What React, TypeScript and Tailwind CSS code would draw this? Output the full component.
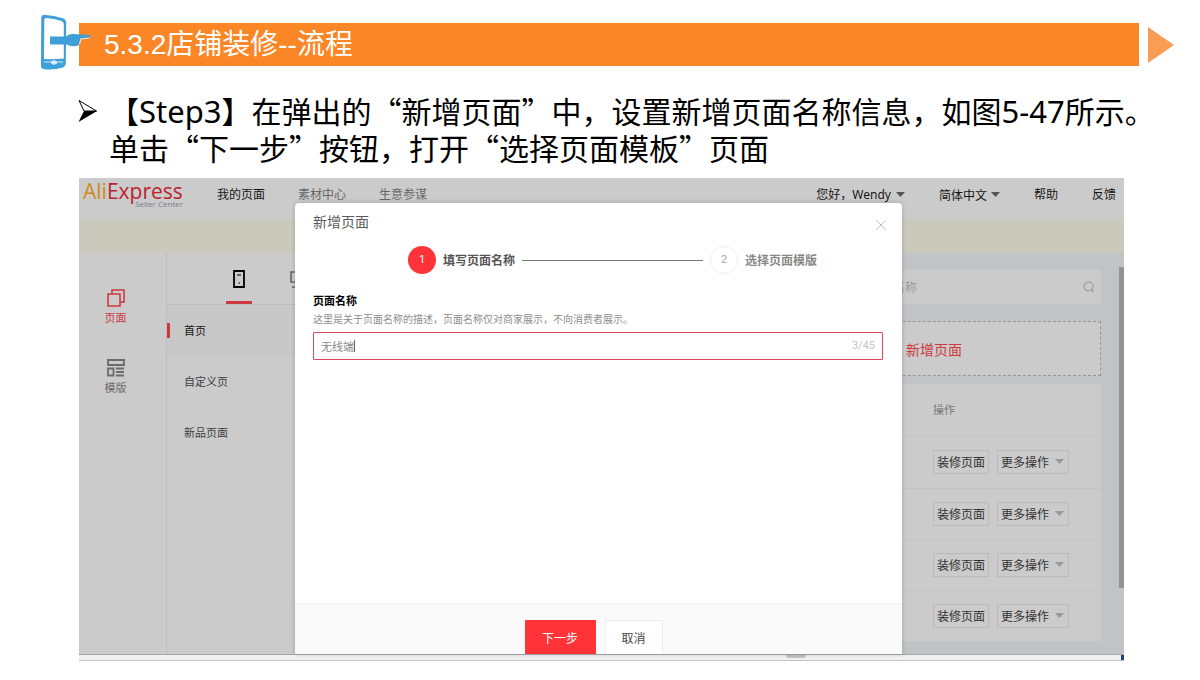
import React from "react";

const hans = "font-['Noto_Sans_CJK_SC',sans-serif]";

function Caret({ className }: { className: string }) {
  return (
    <svg width="9" height="5" viewBox="0 0 9 5" className={className} aria-hidden="true">
      <path d="M0 0h9L4.5 5z" fill="currentColor" />
    </svg>
  );
}

function PhoneLogo() {
  return (
    <svg
      className="absolute -left-10 -top-[9px]"
      width="54"
      height="58"
      viewBox="0 0 54 58"
      aria-hidden="true"
    >
      <path
        fillRule="evenodd"
        fill="#3f9fd8"
        d="M5 .8Q2.500.6 2.300 3.500L2 51.500Q2 54.500 4.500 55Q14 56.500 24 53.500Q26.500 52.500 26.800 49.500L27.200 9Q27.200 5.500 24.500 4.500Q15 1.200 5 .8ZM7 4Q15 4.500 22.500 7Q24.800 8 24.800 10V44.500Q14 45.500 5 45L5.300 5.500Q5.400 4 7 4Z"
      />
      <path d="M5 48h7.500M17.500 48h6.500" stroke="#d8effa" strokeWidth="1.200" />
      <path d="M12 47.500l3-1.500 3 1.500v2l-3 1.500-3-1.500z" fill="#d8effa" />
      <path
        fill="#3f9fd8"
        d="M11 22.500H27Q30 19.500 34 20L50.500 21Q53 22 50.500 23.500L42.500 24.500Q42 29.500 38.500 31.800Q32 33 27.500 30.500H11Z"
      />
      <path d="M40.500 30l1.500-5 8.500-1" stroke="#ffe3c4" strokeWidth="1.200" fill="none" />
    </svg>
  );
}

function TopNav() {
  return (
    <header className="flex h-[42px] items-start justify-between bg-[#cbcbcb] pl-1 pr-2 text-xs text-[#161616]">
      <div className="flex gap-[34px]">
        <a href="#home" className="block w-[100px] font-['Open_Sans',sans-serif]">
          <span className="block text-[21px] leading-[26px]">
            <span className="text-[#cf8a1c]">Ali</span>
            <span className="font-medium text-[#bb2330]">Express</span>
          </span>
          <span className="-mt-1 block text-right text-[8px] leading-[8px] text-[#7b7f86]">
            Seller Center
          </span>
        </a>
        <nav className="flex gap-[33px] pt-[7px] leading-[18px]">
          <a href="#pages">我的页面</a>
          <a href="#assets" className="text-[#666]">素材中心</a>
          <a href="#insight" className="text-[#666]">生意参谋</a>
        </nav>
      </div>
      <div className="flex gap-[34px] pt-[7px] leading-[18px]">
        <button type="button" className="flex items-center gap-[5px]">
          <span>
            您好，<span className="font-['Noto_Sans',sans-serif]">Wendy</span>
          </span>
          <Caret className="text-[#555]" />
        </button>
        <div className="flex items-center gap-1">
          <select aria-label="语言" className="w-12 appearance-none bg-transparent">
            <option>简体中文</option>
          </select>
          <Caret className="text-[#555]" />
        </div>
        <a href="#help">帮助</a>
        <a href="#feedback">反馈</a>
      </div>
    </header>
  );
}

function Sidebar() {
  return (
    <nav className="flex w-[88px] shrink-0 flex-col items-center gap-[34px] border-r border-[#bcbcbc] bg-[#cbcbcb] pt-9 pr-3.5 text-[11px] leading-4">
      <a href="#page" className="flex flex-col items-center gap-0.5 text-[#cc3a40]">
        <svg width="18" height="18" viewBox="0 0 18 18" fill="none" stroke="currentColor" strokeWidth="1.600" aria-hidden="true">
          <path d="M1 5h12v12H1zM5 5V1h12v12h-4" />
        </svg>
        页面
      </a>
      <a href="#template" className="flex flex-col items-center gap-0.5 text-[#6c6c6c]">
        <svg width="18" height="18" viewBox="0 0 18 18" fill="none" stroke="currentColor" strokeWidth="1.800" aria-hidden="true">
          <path d="M1 1h16v5H1zM1 9.500h5.500v7H1zM9 9.500h8M9 13h8M9 16.500h8" />
        </svg>
        模版
      </a>
    </nav>
  );
}

function PageList() {
  return (
    <div className="w-60 shrink-0 bg-[#cbcbcb] text-[11px] text-[#3f3f3f]">
      <div className="flex h-[52px] gap-6 border-b border-[#bcbcbc] pl-[59px]">
        <button type="button" aria-label="手机" className="flex w-[26px] flex-col items-center justify-between border-b-3 border-[#cc3a40] pt-[17px] text-black">
          <svg width="12" height="18" viewBox="0 0 12 18" fill="none" stroke="currentColor" aria-hidden="true">
            <path d="M1 1h10v16H1z" strokeWidth="1.800" />
            <path d="M4 5h4M5.500 13h1.500" strokeWidth="1.200" />
          </svg>
        </button>
        <button type="button" aria-label="电脑" className="flex w-[50px] items-start justify-center pt-[18px] text-[#666]">
          <svg width="22" height="18" viewBox="0 0 22 18" fill="none" stroke="currentColor" strokeWidth="1.600" aria-hidden="true">
            <path d="M1 1h20v10H1zM2 16h18M6 11v5M16 11v5" />
          </svg>
        </button>
      </div>
      <ul>
        <li className="flex h-[51px] items-center bg-[#c8c8c8]">
          <span className="h-[15px] w-[3px] bg-[#cc3a40]" />
          <a href="#index" className="pl-[14px] text-[#161616]">首页</a>
        </li>
        <li className="flex h-[51px] items-center pl-[17px]">
          <a href="#custom">自定义页</a>
        </li>
        <li className="flex h-[51px] items-center pl-[17px]">
          <a href="#new">新品页面</a>
        </li>
      </ul>
    </div>
  );
}

function Content() {
  return (
    <main className="flex min-w-0 flex-1 flex-col bg-[#c1c3c6] pb-[13px] pl-5 pr-[18px] pt-[17px]">
      <label className="flex h-[34px] w-[276px] items-center self-end bg-[#cbcbcb] pl-2 pr-1.5">
        <input
          aria-label="搜索页面名称"
          placeholder="请输入页面名称"
          className="min-w-0 flex-1 bg-transparent text-xs text-[#333] placeholder:text-[#9b9b9b]"
        />
        <svg width="12" height="12" viewBox="0 0 12 12" fill="none" stroke="#9b9b9b" strokeWidth="1.200" aria-hidden="true">
          <circle cx="5.500" cy="5.500" r="4.500" />
          <path d="M8 8l2.500 3" />
        </svg>
      </label>
      <button
        type="button"
        className="mt-[17px] flex h-[55px] items-center justify-end border border-dashed border-[#959595] bg-[#cbcbcb] pr-[138px] text-sm text-[#cc3a40]"
      >
        新增页面
      </button>
      <table className="mt-2 w-full border-collapse bg-[#cbcbcb] text-xs text-[#333]">
        <thead>
          <tr className="h-[51px] border-b border-[#c3c3c3]">
            <th />
            <th className="w-[168px] text-left text-[11px] font-normal text-[#777]">操作</th>
          </tr>
        </thead>
        <tbody>
          {[0, 1, 2, 3].map((row) => (
            <tr key={row} className="h-[51px] border-b border-[#c3c3c3] first:h-[53px] last:border-b-0">
              <td />
              <td>
                <div className="flex gap-2">
                  <button type="button" className="h-6 w-14 border border-[#bababa] leading-[18px]">
                    装修页面
                  </button>
                  <button
                    type="button"
                    className="flex h-6 w-[72px] items-center justify-between border border-[#bababa] pl-[3px] pr-1 leading-[18px]"
                  >
                    更多操作
                    <Caret className="text-[#999]" />
                  </button>
                </div>
              </td>
            </tr>
          ))}
        </tbody>
      </table>
    </main>
  );
}

function NewPageDialog() {
  return (
    <section
      role="dialog"
      aria-labelledby="dialog-title"
      className="absolute bottom-0 left-[216px] right-[222px] top-[25px] flex flex-col overflow-hidden rounded-t bg-white shadow-[0_0_5px_rgba(0,0,0,0.2)]"
    >
      <div className="flex items-start justify-between pl-[18px] pr-4 pt-2">
        <h2 id="dialog-title" className="text-sm leading-5 text-[#5c5c5c]">新增页面</h2>
        <button type="button" aria-label="关闭" className="pt-[9px]">
          <svg width="10" height="10" viewBox="0 0 10 10" stroke="#bdbdbd" strokeWidth="1" aria-hidden="true">
            <path d="M.5.5l9 9M9.500.5l-9 9" />
          </svg>
        </button>
      </div>
      <ol className="mt-[15px] flex items-center pl-[113px] pr-[85px] text-xs font-bold">
        <li className="flex items-center gap-[7px] text-[#555]">
          <span className="flex size-7 items-center justify-center rounded-full bg-[#ff3338] font-['Roboto',sans-serif] text-[11px] font-normal text-white">
            1
          </span>
          填写页面名称
        </li>
        <li aria-hidden="true" className="mx-[7px] h-px flex-1 bg-[#777]" />
        <li className="flex items-center gap-[7px] text-[#888]">
          <span className="flex size-7 items-center justify-center rounded-full border border-[#eee] font-['Roboto',sans-serif] text-[11px] font-normal text-[#aaa]">
            2
          </span>
          选择页面模版
        </li>
      </ol>
      <div className="flex-1 pl-[18px] pr-[19px] pt-[18px]">
        <label htmlFor="page-name" className="block text-[11px] font-bold leading-4 text-black">
          页面名称
        </label>
        <p className="mt-[3px] text-[10px] leading-4 text-[#8e8e8e]">
          这里是关于页面名称的描述，页面名称仅对商家展示，不向消费者展示。
        </p>
        <div className="mt-[5px] flex h-7 items-center rounded-[1px] border border-[#e0485a] px-[7px]">
          <input
            id="page-name"
            defaultValue="无线端"
            className="field-sizing-content bg-transparent text-[11px] text-[#888] outline-none"
          />
          <span className="h-3 w-px bg-[#666]" />
          <span className="ml-auto font-['Roboto',sans-serif] text-[11px] text-[#c4c4c4]">3/45</span>
        </div>
      </div>
      <footer className="flex h-[51px] shrink-0 justify-center gap-[9px] border-t border-[#f2f2f2] bg-[#fafafa] pr-2.5 pt-4 text-xs">
        <button type="button" className="h-9 w-[71px] rounded-[1px] bg-[#ff3338] text-white">下一步</button>
        <button type="button" className="h-9 w-[58px] border border-[#ededed] bg-white text-[#444]">取消</button>
      </footer>
    </section>
  );
}

export default function App() {
  return (
    <div className={`${hans} bg-white pb-5 text-black`}>
      <div className="flex items-center gap-[9px] pl-[79px] pr-[26px] pt-[23px]">
        <div className="relative flex h-[43px] flex-1 items-center bg-[#fb8626] pl-[25px]">
          <PhoneLogo />
          <h1 className="font-['Liberation_Sans','Noto_Sans_CJK_SC',sans-serif] text-[28px] leading-[42px] text-white">
            5.3.2店铺装修--流程
          </h1>
        </div>
        <svg width="26" height="36" viewBox="0 0 26 36" aria-hidden="true">
          <path d="M0 0l26 18L0 36z" fill="#f99d54" />
        </svg>
      </div>

      <ul className="mt-[26px] pl-[78px]">
        <li className="flex gap-[11px] text-[30px] leading-[37px]">
          <svg className="mt-[7px] shrink-0" width="20" height="24" viewBox="0 0 20 24" aria-hidden="true">
            <path d="M1 1.500L18.500 12H6z" fill="#fff" stroke="#000" strokeWidth="1" />
            <path d="M.5 23L6 12h13z" fill="#000" />
          </svg>
          <p>
            【<span className="font-['Noto_Sans',sans-serif] text-[31px] leading-none">Step3</span>
            】在弹出的“新增页面”中，设置新增页面名称信息，如图
            <span className="font-['Noto_Sans',sans-serif] text-[31px] leading-none">5-47</span>所示。
            <br />
            单击“下一步”按钮，打开“选择页面模板”页面
          </p>
        </li>
      </ul>

      <div className="ml-[79px] mr-[76px] mt-3">
        <div className="relative">
          <TopNav />
          <div className="h-[33px] bg-[#cbc9bb]" />
          <div className="flex shadow-[inset_0_4px_4px_rgba(0,0,0,0.1)]">
            <Sidebar />
            <PageList />
            <Content />
            <div className="w-[5px] shrink-0 bg-[#c1c3c6] pt-[14px]">
              <div className="h-[321px] bg-[#929292]" />
            </div>
          </div>
          <NewPageDialog />
        </div>
        <div className="flex h-[7px] justify-end border-y border-t-[#a8a8a8] border-b-[#c4c4c4] bg-[#f1f1f1]">
          <span className="mr-[315px] h-[3px] w-5 rounded-b bg-[#c4c4c4]" />
          <span className="w-[3px] bg-[#1c3f86]" />
        </div>
      </div>
    </div>
  );
}
